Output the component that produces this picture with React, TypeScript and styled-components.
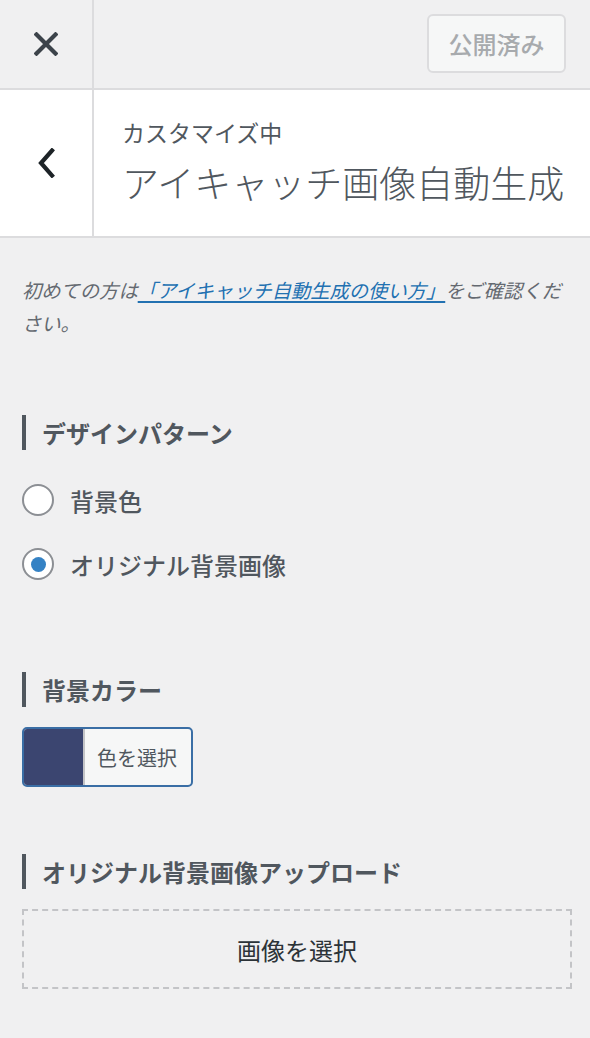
import React from "react";
import styled, { createGlobalStyle } from "styled-components";

const GlobalStyle = createGlobalStyle`
  html, body {
    margin: 0;
    padding: 0;
    background: #f0f0f1;
    font-family: "Noto Sans CJK JP", "Noto Sans", "Liberation Sans", sans-serif;
  }
  * { box-sizing: border-box; }
`;

const Page = styled.div`
  width: 590px;
  min-height: 1038px;
  background: #f0f0f1;
  display: flex;
  flex-direction: column;
`;

const Header = styled.header`
  height: 90px;
  display: flex;
  align-items: stretch;
  border-bottom: 2px solid #dcdcde;
  background: #f0f0f1;
`;

const IconCell = styled.div<{ $bg?: string }>`
  width: 94px;
  flex: none;
  display: flex;
  align-items: center;
  justify-content: center;
  border-right: 2px solid #dcdcde;
  background: ${(p) => p.$bg || "transparent"};
`;

const HeaderSpacer = styled.div`
  flex: 1;
  display: flex;
  align-items: center;
  justify-content: flex-end;
  padding-right: 24px;
  padding-bottom: 2px;
`;

const PublishButton = styled.button`
  width: 139px;
  height: 59px;
  border: 2px solid #dcdcde;
  border-radius: 6px;
  background: #f6f7f7;
  color: #a7aaad;
  font-family: inherit;
  font-size: 24px;
  font-weight: 500;
  display: flex;
  align-items: center;
  justify-content: center;
  padding: 0;
`;

const TitleBar = styled.div`
  height: 148px;
  display: flex;
  background: #fff;
  border-bottom: 2px solid #dcdcde;
`;

const TitleText = styled.div`
  flex: 1;
  display: flex;
  flex-direction: column;
  justify-content: center;
  padding-left: 28px;
  padding-bottom: 2px;
  color: #50575e;
`;

const SubTitle = styled.div`
  font-size: 23px;
  line-height: 30px;
  font-weight: 400;
  color: #50575e;
`;

const MainTitle = styled.div`
  margin-top: 10px;
  font-size: 37px;
  line-height: 50px;
  font-weight: 300;
  color: #50575e;
  white-space: nowrap;
`;

const Body = styled.div`
  display: flex;
  flex-direction: column;
  padding: 36px 18px 40px 22px;
`;

const Description = styled.p`
  margin: 0 8px 0 0;
  font-size: 19.3px;
  line-height: 33px;
  font-style: italic;
  color: #646970;
`;

const Link = styled.a`
  color: #2271b1;
  text-decoration: underline;
  text-decoration-thickness: 2px;
  text-underline-offset: 3px;
`;

const SectionTitle = styled.h3<{ $mt: number }>`
  margin: ${(p) => p.$mt}px 0 0 0;
  height: 35px;
  display: flex;
  align-items: center;
  border-left: 4px solid #50575e;
  padding-left: 16px;
  font-size: 24px;
  font-weight: 600;
  color: #50575e;
`;

const RadioRow = styled.label<{ $mt: number }>`
  margin-top: ${(p) => p.$mt}px;
  height: 32px;
  display: flex;
  align-items: center;
  gap: 16px;
  font-size: 24px;
  font-weight: 500;
  color: #50575e;
`;

const RadioCircle = styled.span<{ $checked?: boolean }>`
  width: 32px;
  height: 32px;
  border-radius: 50%;
  border: 2px solid #8c8f94;
  background: #fff;
  display: flex;
  align-items: center;
  justify-content: center;
  flex: none;
  &::after {
    content: "";
    width: 15px;
    height: 15px;
    border-radius: 50%;
    background: ${(p) => (p.$checked ? "#3582c4" : "transparent")};
  }
`;

const ColorButton = styled.button`
  margin-top: 20px;
  width: 171px;
  height: 60px;
  padding: 0;
  display: flex;
  align-items: stretch;
  border: 2px solid #3a6ea5;
  border-radius: 5px;
  background: #f6f7f7;
  overflow: hidden;
  font-family: inherit;
`;

const Swatch = styled.span<{ $color: string }>`
  width: 61px;
  flex: none;
  background: ${(p) => p.$color};
  border-right: 2px solid #c3c4c7;
`;

const ColorLabel = styled.span`
  flex: 1;
  display: flex;
  align-items: center;
  justify-content: center;
  font-size: 20px;
  color: #50575e;
  padding-right: 2px;
`;

const UploadBox = styled.button`
  margin-top: 20px;
  width: 550px;
  height: 80px;
  border: 2px dashed #c3c4c7;
  background: transparent;
  font-family: inherit;
  font-size: 24px;
  color: #2c3338;
  display: flex;
  align-items: center;
  justify-content: center;
  padding: 0;
`;

const CloseIcon = () => (
  <svg width="24" height="24" viewBox="0 0 24 24">
    <path d="M2.5 2.5 L21.5 21.5 M21.5 2.5 L2.5 21.5" stroke="#3c434a" strokeWidth="4.2" strokeLinecap="square" fill="none" />
  </svg>
);

const BackIcon = () => (
  <svg width="20" height="30" viewBox="0 0 20 30">
    <path d="M16 2.5 L5 15 L16 27.5" stroke="#1d2327" strokeWidth="4.2" fill="none" strokeLinecap="square" />
  </svg>
);

export default function App() {
  return (
    <>
      <GlobalStyle />
      <Page>
        <Header>
          <IconCell>
            <CloseIcon />
          </IconCell>
          <HeaderSpacer>
            <PublishButton>公開済み</PublishButton>
          </HeaderSpacer>
        </Header>
        <TitleBar>
          <IconCell $bg="#fff">
            <BackIcon />
          </IconCell>
          <TitleText>
            <SubTitle>カスタマイズ中</SubTitle>
            <MainTitle>アイキャッチ画像自動生成</MainTitle>
          </TitleText>
        </TitleBar>
        <Body>
          <Description>
            初めての方は<Link href="#">「アイキャッチ自動生成の使い方」</Link>をご確認ください。
          </Description>
          <SectionTitle $mt={75}>デザインパターン</SectionTitle>
          <RadioRow $mt={34}>
            <RadioCircle />
            背景色
          </RadioRow>
          <RadioRow $mt={32}>
            <RadioCircle $checked />
            オリジナル背景画像
          </RadioRow>
          <SectionTitle $mt={92}>背景カラー</SectionTitle>
          <ColorButton>
            <Swatch $color="#3b4570" />
            <ColorLabel>色を選択</ColorLabel>
          </ColorButton>
          <SectionTitle $mt={67}>オリジナル背景画像アップロード</SectionTitle>
          <UploadBox>画像を選択</UploadBox>
        </Body>
      </Page>
    </>
  );
}
